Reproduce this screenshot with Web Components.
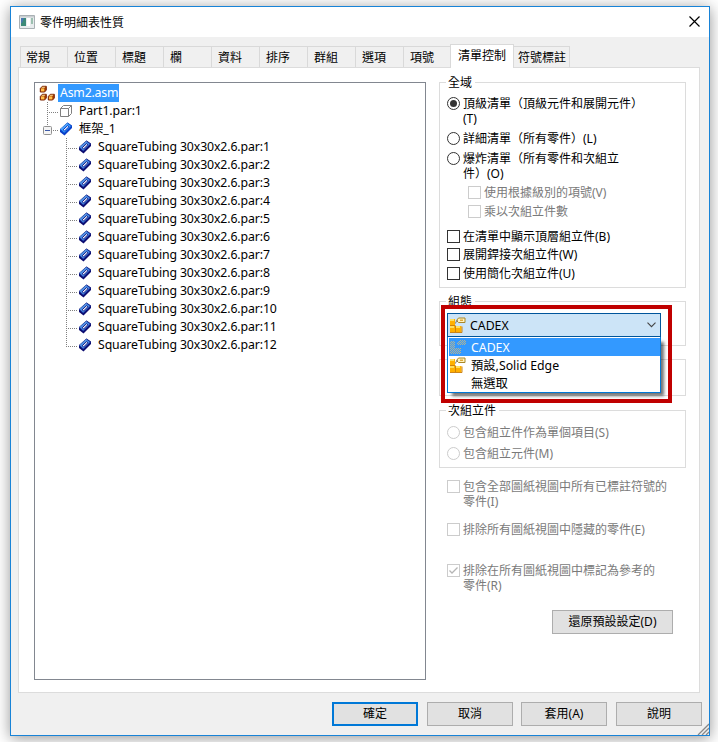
<!DOCTYPE html>
<html lang="zh-Hant">
<head>
<meta charset="utf-8">
<title>零件明細表性質</title>
<style>
html,body{margin:0;height:742px;overflow:hidden;background:#fff}
body{font:12px/15px "Noto Sans","Noto Sans CJK TC",sans-serif;color:#000;box-sizing:border-box;padding:6px 7px 6px 10px}
</style>
</head>
<body>
<bom-dialog></bom-dialog>
<script>
function define(name, html, setup) {
  const t = document.createElement('template');
  t.innerHTML = '<style>*{box-sizing:border-box}:host{box-sizing:border-box}</style>' + html;
  customElements.define(name, class extends HTMLElement {
    constructor() {
      super();
      this.attachShadow({mode: 'open'}).append(t.content.cloneNode(true));
    }
    connectedCallback() { if (setup) setup(this, this.shadowRoot); }
  });
}

const ICONS = {
  asm: `<svg width="17" height="16" viewBox="0 0 17 16"><defs><g id="c"><path d="M.5 3L2.500.8H6.500V4.500L4.800 6.500H.5Z" fill="#a53c00" stroke="#7a2200"/><path d="M1.200 2.900h3.300v3H1.200z" fill="#ffc04a"/><path d="M1.500 2.300L2.700 1.300H5.700L4.700 2.300Z" fill="#ffe8a0"/></g></defs><use href="#c" x=".8" y=".5"/><use href="#c" x=".8" y="8.500"/><use href="#c" x="8.800" y="8.500"/></svg>`,
  part: `<svg width="16" height="16" viewBox="0 0 16 16"><path d="M2.500 5.500H10.500V13.500H2.500ZM2.500 5.500L5.500 2.500H13.500L10.500 5.500M13.500 2.500V10.500L10.500 13.500" fill="#fff" stroke="#808080"/></svg>`,
  frame: `<svg width="16" height="16" viewBox="0 0 16 16"><path d="M2 8L9.500 1.500L14 4.500V7L6.500 14.500L2 11Z" fill="#0a3cc8"/><path d="M2.500 8.500L9.500 2.200L13.300 5L6.300 12Z" fill="#3c9cff" stroke="#0757cf" stroke-width=".7"/><path d="M2.800 8.300L9.500 2.500" stroke="#7cc8ff" stroke-width=".8"/><path d="M5.200 8.800L9.500 4.700L10.900 5.700L6.600 10Z" fill="#fff" stroke="#0a36c0"/></svg>`,
  tube: `<svg width="16" height="16" viewBox="0 0 16 16"><path d="M2 8L9.500 1.500L14 4.500V7L6.500 14.500L2 11Z" fill="#0c0c70"/><path d="M2.500 8.500L9.500 2.200L13.300 5L6.300 12Z" fill="#4c90e4" stroke="#1430a0" stroke-width=".7"/><path d="M2.800 8.300L9.500 2.500" stroke="#6cb4f8" stroke-width=".8"/><path d="M5.200 8.800L9.500 4.700L10.900 5.700L6.600 10Z" fill="#fff" stroke="#141c88"/></svg>`,
  config: `<svg width="17" height="16" viewBox="0 0 17 16"><path d="M1 2h5v6.500H1zM1 9h5.500v6H1zM7 9h5.500v6H7z" fill="#ffb000"/><path d="M1 2h4v2H1zM1 9h4v2H1zM7 9h4v2H7z" fill="#ffdf60"/><path d="M1 8.500h5.500M1 15.500h12V9.500M6.500 15V9" fill="none" stroke="#c87800" stroke-width=".9"/><path d="M7.500 3.500L9.500 1H16V5.500H9.500Z" fill="#fff3bd" stroke="#a88628"/><path d="M11 2.500h3v1.500h-3" fill="#e0a838"/><path d="M6.500 6.500Q6.500 4 9 3.500" fill="none" stroke="#777"/></svg>`,
  configSel: `<svg width="17" height="16" viewBox="0 0 17 16"><defs><pattern id="d" width="2" height="2" patternUnits="userSpaceOnUse"><path d="M0 0h1v1H0zM1 1h1v1H1z" fill="#b8b48c"/></pattern></defs><path d="M1 2h5v7H1zM1 9h11v6H1zM8 3L10 1H17V6H9z" fill="url(#d)" shape-rendering="crispEdges"/></svg>`
};

define('app-icon', `<style>:host{display:block;flex:none;height:16px}svg{display:block}</style><div></div>`,
  (el, root) => { root.querySelector('div').innerHTML = ICONS[el.getAttribute('name')]; });

define('title-bar', `<style>
:host{display:flex;align-items:center;height:30px;background:#fff;padding:0 9px 0 8px}
.app{width:16px;height:14px;display:block;margin-right:5px;margin-top:-1px}
.x{margin-top:-2px}
span{flex:1}
</style>
<svg class="app" viewBox="0 0 16 14"><path d="M.5.5h15v13H.5z" fill="#e8ecee" stroke="#a9b0b4"/><path d="M1 1h14v1.500H1z" fill="#c9ced1"/><path d="M2 3h5v8H2z" fill="#3c8a78"/><path d="M2 3h3l-2 5H2z" fill="#4978b0"/><path d="M8 3h3v8H8z" fill="#fff"/><path d="M12 3h2v6h-2z" fill="#9cc0b0"/></svg>
<span><slot></slot></span>
<svg class="x" width="11" height="11" viewBox="0 0 11 11"><path d="M.5.5l10 10M10.500.5l-10 10" stroke="#000" stroke-width="1.200"/></svg>`);

define('tab-item', `<style>
:host{display:block;width:48px;height:21px;border:1px solid #d9d9d9;border-right:0;border-bottom:0;background:#f0f0f0;padding:3px 0 0 6px;white-space:nowrap}
:host([last]){width:56px;border-right:1px solid #d9d9d9;border-left:0;padding-left:4px}
:host([active]){width:64px;background:#fff;border-right:1px solid #d9d9d9;padding:3px 0 0 7px;margin-bottom:-1px;height:24px;position:relative}
:host([first]){width:47px;padding-left:5px}
</style><slot></slot>`);

define('tree-item', `<style>
:host{display:flex;height:18px;align-items:center;font-size:12.300px;letter-spacing:-.12px;line-height:18px;white-space:nowrap}
.g{flex:none;display:block}
span{height:18px;line-height:17px;padding:0 2px;margin-left:3px}
:host([selected]) span{background:#39f;color:#fff;margin-left:2px;width:61px;letter-spacing:-.2px}
</style><svg class="g" height="18"></svg><app-icon></app-icon><span><slot></slot></span>`,
(el, root) => {
  const depth = +el.getAttribute('depth'), w = [4, 23, 42][depth];
  const g = root.querySelector('svg'), last = el.hasAttribute('last'), box = el.hasAttribute('box');
  g.setAttribute('width', w);
  const line = d => `<path d="${d}" fill="none" stroke="#808080" stroke-dasharray="1 1"/>`;
  let s = '';
  if (depth === 1) s = line('M12.500 0V' + (box ? 5 : 18)) + line('M14 10.500H23');
  if (depth === 2) s = line('M31.500 0V' + (last ? 11 : 18)) + line('M33 10.500H42');
  if (box) s += '<rect x="8.500" y="6.500" width="8" height="8" rx="1" fill="#f4f4f4" stroke="#919191"/><path d="M10 10.500h5" stroke="#3c5aa8"/>';
  g.innerHTML = s;
  root.querySelector('app-icon').replaceWith(Object.assign(document.createElement('div'), {innerHTML: `<app-icon name="${el.getAttribute('icon')}"></app-icon>`}));
});

define('bom-tree', `<style>:host{display:block;width:392px;height:598px;border:1px solid #828790;padding-top:1px;background:#fff}</style><div id="rows"></div>`,
(el, root) => {
  let h = `<tree-item depth="0" icon="asm" selected>Asm2.asm</tree-item><tree-item depth="1" icon="part">Part1.par:1</tree-item><tree-item depth="1" icon="frame" box>框架_1</tree-item>`;
  for (let i = 1; i <= 12; i++) h += `<tree-item depth="2" icon="tube" ${i === 12 ? 'last' : ''}>SquareTubing 30x30x2.6.par:${i}</tree-item>`;
  root.querySelector('#rows').innerHTML = h;
});

define('group-box', `<style>
:host{display:block;width:247px;border:1px solid #dcdcdc}
.t{width:fit-content;height:15px;margin:-8px 0 0 6px;padding:0 3px 0 2px;background:#fff}
.t:empty{visibility:hidden}
</style><div class="t"></div><slot></slot>`,
(el, root) => { root.querySelector('.t').textContent = el.getAttribute('label'); });

define('option-mark', `<style>
:host{display:flex;align-items:flex-start;white-space:pre-line;--c:#333}
:host([disabled]){color:#7a7a7a;--c:#ccc}
i{flex:none;width:13px;height:13px;margin:1px 3px 0 0;border:1px solid var(--c);background:#fff;display:grid;place-items:center}
:host([type=radio]) i{border-radius:50%}
:host([type=radio][checked]) i::after{content:"";width:7px;height:7px;border-radius:50%;background:#333}
svg{display:none}
:host([type=check][checked]) svg{display:block}
</style><i><svg width="11" height="11" viewBox="0 0 11 11"><path d="M1.500 5.500L4 8L9.500 2.500" fill="none" stroke="#b5b5b5" stroke-width="1.300"/></svg></i><slot></slot>`);

define('push-button', `<style>
:host{display:flex;align-items:center;justify-content:center;width:86px;height:24px;background:#e1e1e1;border:1px solid #adadad;padding-bottom:1px}
:host([default]){border:2px solid #0078d7}
</style><slot></slot>`);

define('combo-box', `<style>
:host{display:block;position:relative;width:214px;font-size:12.300px;z-index:2}
.f{height:24px;border:1px solid #00559b;background:#cce4f7;display:flex;align-items:center;padding:0 4px 0 1px}
.f span{flex:1;margin-left:4px;padding-top:1px}
.l{position:absolute;top:24px;left:0;width:214px;height:56px;background:#fff;border:1px solid #0078d7;border-top:0;padding:1px 0 0 1px;box-shadow:4px 4px 3px -1px rgba(0,0,0,.55)}
.r{height:18px;display:flex;align-items:center;padding-left:0}
.r b{font-weight:400;margin-left:5px;line-height:18px;padding-top:2px}
.r.on{background:#39f;color:#fff}
.r.n{padding-left:17px}
.mark{position:absolute;left:-6px;top:-8px;width:231px;height:98px;border:4px solid #c00000}
</style>
<div class="f"><app-icon name="config"></app-icon><span>CADEX</span><svg width="9" height="6" viewBox="0 0 9 6"><path d="M.5.7L4.500 4.700L8.500.7" fill="none" stroke="#444" stroke-width="1.100"/></svg></div>
<div class="l"><div class="r on"><app-icon name="configSel"></app-icon><b>CADEX</b></div><div class="r"><app-icon name="config"></app-icon><b>預設,Solid Edge</b></div><div class="r n"><b>無選取</b></div></div>
<div class="mark"></div>`);

define('list-control', `<style>
:host{display:block;width:247px}
option-mark{padding-left:7px;height:15px}
.two{height:30px}
.in{padding-left:28px}
group-box{height:var(--h);margin-bottom:var(--m)}
push-button{width:121px;margin:0 0 0 113px}
</style>
<group-box label="全域" style="--h:206px;--m:13px">
<option-mark type="radio" checked class="two" style="margin-top:6px">頂級清單（頂級元件和展開元件）
(T)</option-mark>
<option-mark type="radio" style="margin-top:5px">詳細清單（所有零件）(L)</option-mark>
<option-mark type="radio" class="two" style="margin-top:5px">爆炸清單（所有零件和次組立
件）(O)</option-mark>
<option-mark type="check" disabled class="in" style="margin-top:4px">使用根據級別的項號(V)</option-mark>
<option-mark type="check" disabled class="in" style="margin-top:4px">乘以次組立件數</option-mark>
<option-mark type="check" style="margin-top:10px">在清單中顯示頂層組立件(B)</option-mark>
<option-mark type="check" style="margin-top:3px">展開銲接次組立件(W)</option-mark>
<option-mark type="check" style="margin-top:4px">使用簡化次組立件(U)</option-mark>
</group-box>
<group-box label="組態" style="--h:45px;--m:13px"><combo-box style="margin:4px 0 0 7px"></combo-box></group-box>
<group-box label="" style="--h:37px;--m:14px"></group-box>
<group-box label="次組立件" style="--h:58px;--m:11px">
<option-mark type="radio" disabled style="margin-top:7px">包含組立件作為單個項目(S)</option-mark>
<option-mark type="radio" disabled style="margin-top:6px">包含組立元件(M)</option-mark>
</group-box>
<option-mark type="check" disabled class="two" style="padding-left:8px">包含全部圖紙視圖中所有已標註符號的
零件(I)</option-mark>
<option-mark type="check" disabled style="padding-left:8px;margin-top:13px">排除所有圖紙視圖中隱藏的零件(E)</option-mark>
<option-mark type="check" disabled checked class="two" style="padding-left:8px;margin-top:26px">排除在所有圖紙視圖中標記為參考的
零件(R)</option-mark>
<push-button style="margin-top:17px">還原預設設定(D)</push-button>`);

define('bom-dialog', `<style>
:host{display:flex;flex-direction:column;width:700px;height:730px;border:1px solid #1883d7;background:#f0f0f0;box-shadow:0 2px 14px rgba(0,0,0,.42);position:relative}
.tabs{display:flex;align-items:flex-end;height:22px;margin:8px 0 0 9px}
.page{width:682px;height:626px;margin:0 0 0 7px;border:1px solid #dcdcdc;background:#fff;display:flex;padding:14px 0 0 15px;gap:13px}
.foot{display:grid;grid-template-columns:95px 94px 95px 86px;justify-content:end;padding:9px 7px 0 0}
.grip{position:absolute;right:0;bottom:0}
</style>
<title-bar>零件明細表性質</title-bar>
<div class="tabs"><tab-item first>常規</tab-item><tab-item>位置</tab-item><tab-item>標題</tab-item><tab-item>欄</tab-item><tab-item>資料</tab-item><tab-item>排序</tab-item><tab-item>群組</tab-item><tab-item>選項</tab-item><tab-item style="width:47px">項號</tab-item><tab-item active>清單控制</tab-item><tab-item last>符號標註</tab-item></div>
<div class="page"><bom-tree></bom-tree><list-control></list-control></div>
<div class="foot"><push-button default>確定</push-button><push-button>取消</push-button><push-button>套用(A)</push-button><push-button>說明</push-button></div>
<svg class="grip" width="12" height="12" viewBox="0 0 12 12"><path d="M1 12L12 1M5 12L12 5M9 12L12 9" stroke="#888" stroke-width="1.300"/></svg>`);
</script>
</body>
</html>
